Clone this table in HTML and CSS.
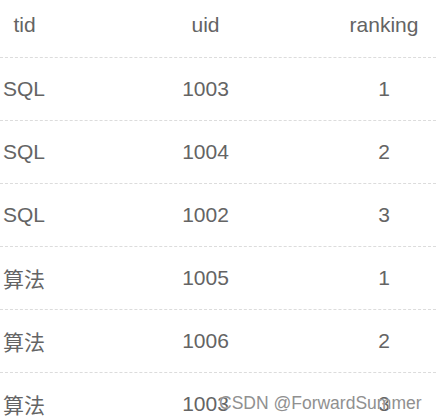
FILE: index.html
```html
<!DOCTYPE html>
<html>
<head>
<meta charset="utf-8">
<link rel="stylesheet" href="styles.css">
</head>
<body>
<div class="table">
  <div class="row head">
    <div class="c1">tid</div><div class="c2">uid</div><div class="c3">ranking</div>
  </div>
  <div class="row"><div class="c1">SQL</div><div class="c2">1003</div><div class="c3">1</div></div>
  <div class="row"><div class="c1">SQL</div><div class="c2">1004</div><div class="c3">2</div></div>
  <div class="row"><div class="c1">SQL</div><div class="c2">1002</div><div class="c3">3</div></div>
  <div class="row"><div class="c1">算法</div><div class="c2">1005</div><div class="c3">1</div></div>
  <div class="row"><div class="c1">算法</div><div class="c2">1006</div><div class="c3">2</div></div>
  <div class="row"><div class="c1">算法</div><div class="c2">1003</div><div class="c3">3</div></div>
</div>
<div class="watermark">CSDN @ForwardSummer</div>
</body>
</html>
```
FILE: styles.css
```css
html, body {
  margin: 0;
  padding: 0;
  background: #fff;
  overflow: hidden;
}
body {
  width: 436px;
  height: 418px;
  position: relative;
  font-family: "Liberation Sans", Arial, "Noto Sans CJK SC", sans-serif;
  font-size: 21px;
  color: #646464;
}
.table {
  display: flex;
  flex-direction: column;
}
.row {
  display: grid;
  grid-template-columns: 49px 301px 68px;
  height: 63px;
  align-items: center;
  border-bottom: 1px dashed #dcdcdc;
  box-sizing: border-box;
}
.row.head {
  height: 58px;
  padding-bottom: 8px;
}
.c1 {
  padding-left: 3px;
  white-space: nowrap;
}
.head .c1 {
  padding-left: 0;
  text-align: center;
}
.c2 {
  text-align: center;
  padding-left: 12px;
}
.c3 {
  display: flex;
  justify-content: center;
}
.watermark {
  position: absolute;
  left: 219px;
  top: 393px;
  font-size: 17.5px;
  color: #909090;
  text-shadow: 0 0 1px #fff;
  white-space: nowrap;
}
```
